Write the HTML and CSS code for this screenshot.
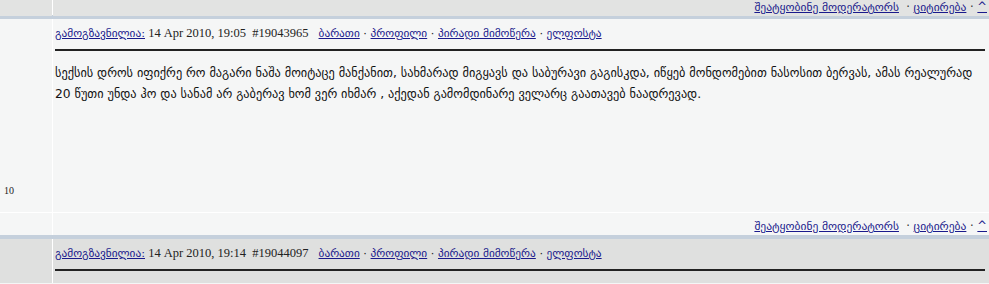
FILE: index.html
```html
<!DOCTYPE html>
<html lang="ka">
<head>
<meta charset="UTF-8">
<title>ფორუმი</title>
<link rel="stylesheet" href="styles.css">
</head>
<body>

<!-- footer of the previous post -->
<div class="row bar">
  <div class="side"></div>
  <div class="main actions">
    <a href="#">შეატყობინე მოდერატორს</a> &nbsp;· <a href="#">ციტირება</a> · <a href="#">^</a>
  </div>
</div>
<div class="sep"></div>

<!-- post -->
<div class="row post">
  <div class="side author"><span class="count">10</span></div>
  <div class="main">
    <div class="post-head">
      <span class="meta"><a href="#">გამოგზავნილია:</a> 14 Apr 2010, 19:05 &nbsp;#19043965</span>
      <span class="links"><a href="#">ბარათი</a> · <a href="#">პროფილი</a> · <a href="#">პირადი მიმოწერა</a> · <a href="#">ელფოსტა</a></span>
    </div>
    <div class="post-body">
      სექსის დროს იფიქრე რო მაგარი ნაშა მოიტაცე მანქანით, სახმარად მიგყავს და საბურავი გაგისკდა, იწყებ მონდომებით ნასოსით ბერვას, ამას რეალურად 20 წუთი უნდა ჰო და სანამ არ გაბერავ ხომ ვერ იხმარ , აქედან გამომდინარე ველარც გაათავებ ნაადრევად.
    </div>
  </div>
</div>
<div class="row bar light">
  <div class="side"></div>
  <div class="main actions">
    <a href="#">შეატყობინე მოდერატორს</a> &nbsp;· <a href="#">ციტირება</a> · <a href="#">^</a>
  </div>
</div>
<div class="sep"></div>

<!-- next post -->
<div class="row post next">
  <div class="side"></div>
  <div class="main">
    <div class="post-head">
      <span class="meta"><a href="#">გამოგზავნილია:</a> 14 Apr 2010, 19:14 &nbsp;#19044097</span>
      <span class="links"><a href="#">ბარათი</a> · <a href="#">პროფილი</a> · <a href="#">პირადი მიმოწერა</a> · <a href="#">ელფოსტა</a></span>
    </div>
  </div>
</div>

</body>
</html>
```

FILE: styles.css
```css
/* forum topic */
body {
margin: 0;
padding: 0;
background-color: #f5f6f6;
font-family: "Liberation Serif", "DejaVu Sans", serif;
color: #222;
}

a {
color: #1a1a8c;
}

.row {
display: grid;
grid-template-columns: 52px 1fr;
column-gap: 1px;
background-color: #ffffff; /* shows as the thin column divider */
}

.side,
.main {
background-color: #f5f6f6;
}

/* action bar under a post */
.bar {
height: 15px;
}

.bar .side,
.bar .main {
background-color: #e2e3e2;
}

.bar.light {
height: 22px;
border-top: 1px solid #ffffff;
}

.bar.light .side,
.bar.light .main {
background-color: #f5f6f6;
}

.actions {
display: flex;
justify-content: flex-end;
align-items: flex-end;
padding-right: 2px;
font-family: "DejaVu Sans", sans-serif;
font-size: 11.5px;
line-height: 14px;
color: #333;
white-space: pre;
}

.bar:first-child .actions {
padding-bottom: 2px;
}

.bar.light .actions {
padding-bottom: 2px;
}

.sep {
height: 4px;
background-color: #c5d0dc;
}

/* post */
.post {
height: 193px;
}

.author {
display: flex;
align-items: flex-end;
padding: 0 0 16px 4px;
}

.count {
font-size: 10px;
color: #222;
}

.post-head {
display: flex;
gap: 10px;
align-items: baseline;
margin: 0 4px 0 2px;
padding: 7px 0 8px;
border-bottom: 2px solid #222;
font-size: 12.5px;
line-height: 15px;
}

.post-head a,
.post-head .links {
font-family: "DejaVu Sans", sans-serif;
font-size: 11.3px;
}

.post-body {
padding: 12px 4px 0 2px;
font-family: "DejaVu Sans", sans-serif;
font-size: 12.3px;
line-height: 21px;
color: #111;
}

.next {
height: 44px;
}

.next .side,
.next .main {
background-color: #dfe0df;
}
```
